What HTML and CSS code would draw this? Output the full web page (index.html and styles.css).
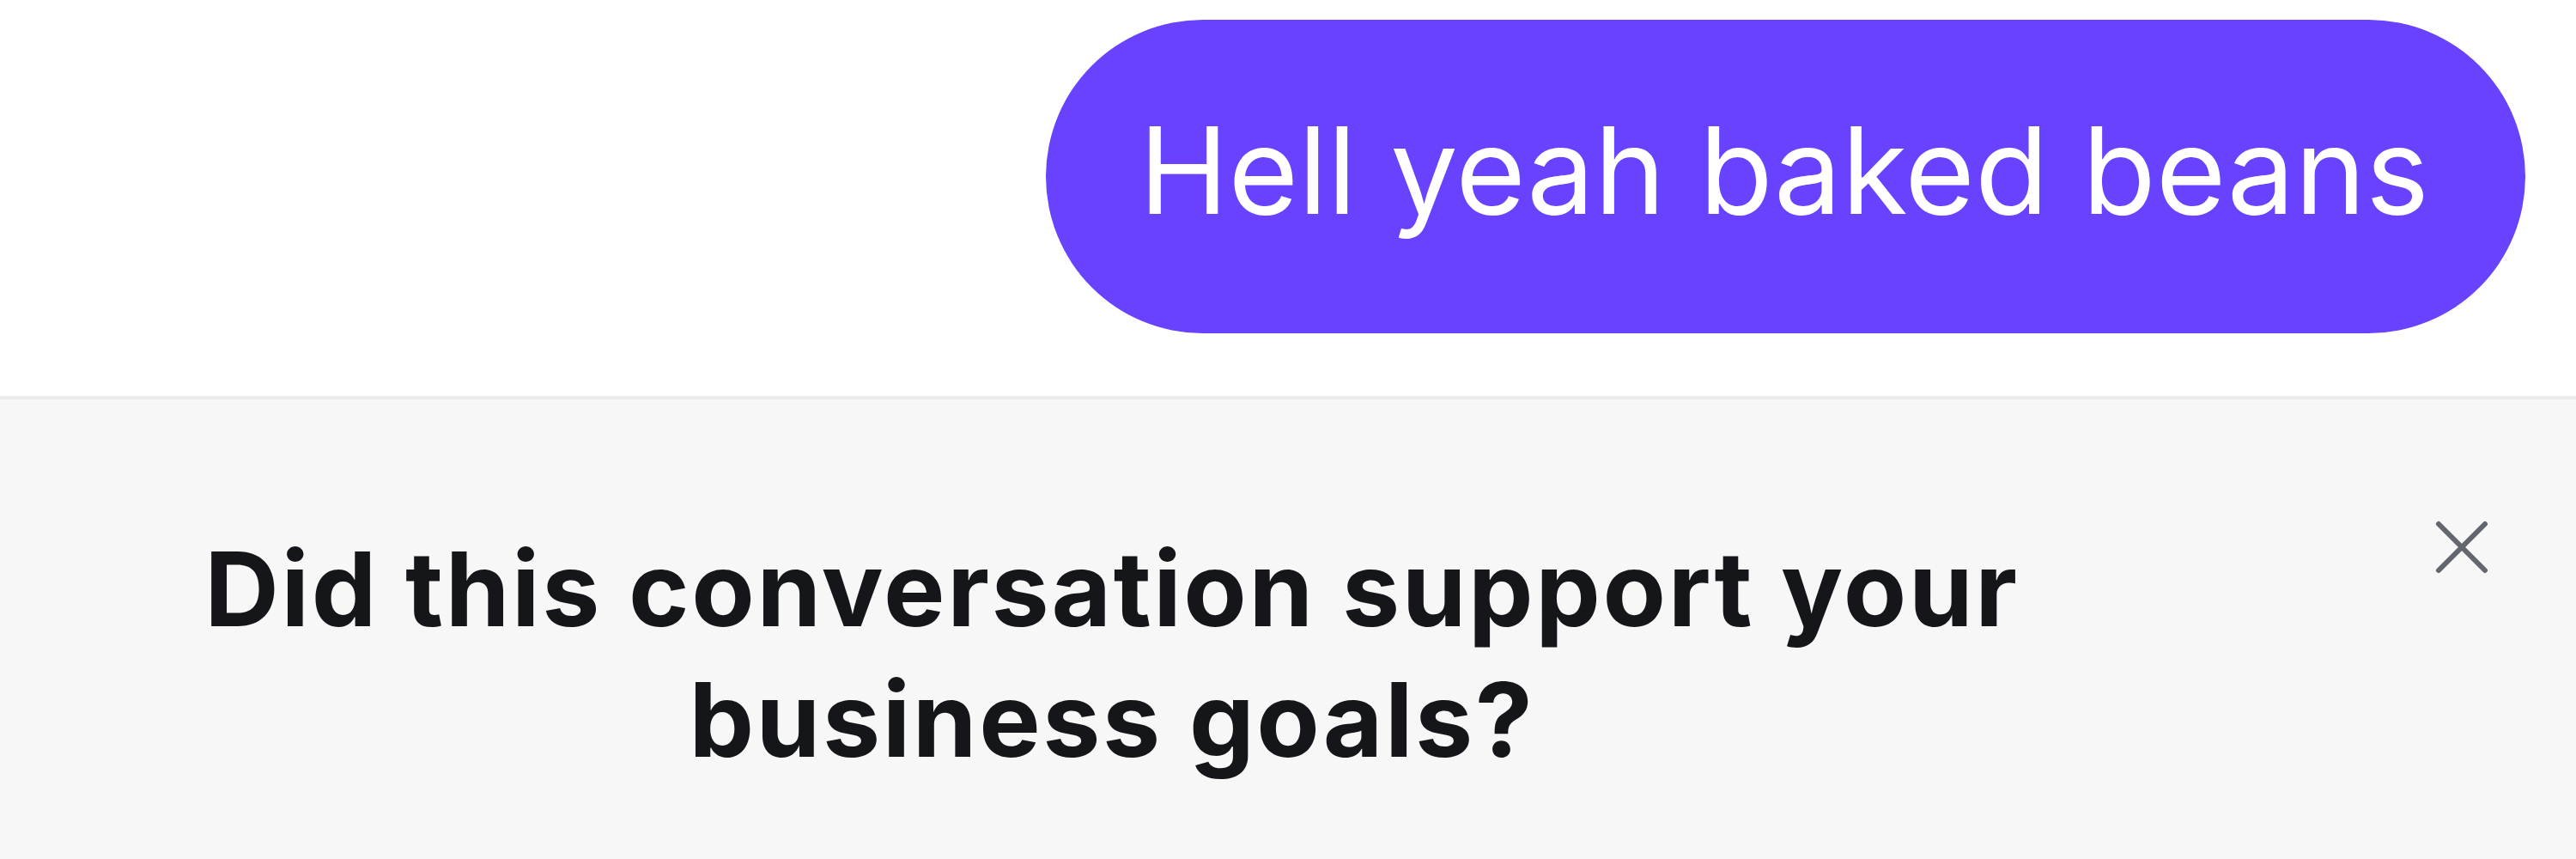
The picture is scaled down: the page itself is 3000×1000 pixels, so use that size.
FILE: index.html
```html
<!DOCTYPE html>
<html lang="en">
<head>
    <meta charset="UTF-8">
    <title>Chat</title>
    <link rel="stylesheet" href="styles.css">
</head>
<body>
	<div id="chat">
		<div class="bubble">Hell yeah baked beans</div>
	</div>
	<div id="feedback">
		<div class="question">Did this conversation support your business goals?</div>
		<div class="close">
			<svg width="62" height="62" viewBox="0 0 62 62">
				<path d="M4 4 L58 58 M58 4 L4 58" stroke="#63666e" stroke-width="6" stroke-linecap="round" fill="none"/>
			</svg>
		</div>
	</div>
</body>
</html>
```

FILE: styles.css
```css
*{
	padding: 0px;
	margin: 0px;
	box-sizing: border-box;
}
body{
	background-color: #ffffff;
	font-family: Inter, "Noto Sans", sans-serif;
}
#chat{
	height: 461px;
	padding: 23px 59px 0 0;
	display: flex;
	justify-content: flex-end;
	align-items: flex-start;
}
.bubble{
	background-color: #6842ff;
	color: #ffffff;
	font-size: 140px;
	line-height: 169px;
	padding: 91px 112px 105px 108px;
	border-radius: 200px;
	white-space: nowrap;
}
#feedback{
	height: 539px;
	border-top: 4px solid #ebebed;
	background-color: #f7f7f8;
	display: flex;
	align-items: flex-start;
	padding: 141px 102px 0 60px;
}
.question{
	flex: 1;
	text-align: center;
	font-size: 120px;
	font-weight: 700;
	line-height: 152px;
	letter-spacing: 2.6px;
	color: #15161a;
	padding-top: 4px;
	padding-right: 306px;
}
.close{
	width: 62px;
	height: 62px;
}
.close svg{
	display: block;
}
```
